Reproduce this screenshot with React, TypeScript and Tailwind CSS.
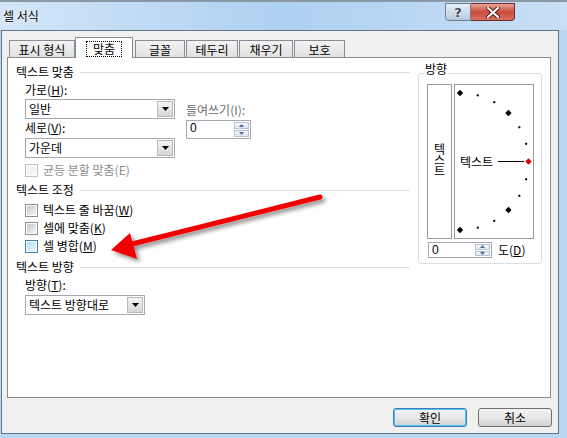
import React from "react";

type P = { className?: string; children?: React.ReactNode };

function Tab({ className = "", children, active }: P & { active?: boolean }) {
  if (active) {
    return (
      <div
        className={`relative z-10 -mb-px h-[21px] border border-b-0 border-[#898c95] bg-white flex items-start justify-center pt-[3px] ${className}`}
      >
        <span className="h-[16px] px-[6px] leading-[14px] border border-dotted border-black">{children}</span>
      </div>
    );
  }
  return (
    <div
      className={`h-[17px] border border-b-0 border-[#898c95] bg-gradient-to-b from-[#f3f3f3] to-[#e1e1e1] flex items-center justify-center leading-[14px] pt-[2px] ${className}`}
    >
      {children}
    </div>
  );
}

function Header({ className = "", children }: P) {
  return (
    <div className={`flex items-center h-[14px] ${className}`}>
      <span className="leading-[14px] whitespace-nowrap">{children}</span>
      <div className="ml-[6px] flex-1 h-px bg-[#d5dfe5]" />
    </div>
  );
}

function Arrow() {
  return (
    <svg width="7" height="4" viewBox="0 0 7 4">
      <polygon points="0,0 7,0 3.5,4" fill="#000" />
    </svg>
  );
}

function Combo({ className = "", children }: P) {
  return (
    <div className={`h-[20px] border border-[#a5a9ae] bg-white flex ${className}`}>
      <span className="flex-1 pl-[3px] leading-[18px] whitespace-nowrap">{children}</span>
      <div className="m-px w-[16px] border border-[#b9b9b9] bg-gradient-to-b from-[#f4f4f4] to-[#d6d6d6] flex items-center justify-center">
        <Arrow />
      </div>
    </div>
  );
}

function Spin({ className = "" }: P) {
  return (
    <div className={`border border-[#a5a9ae] bg-white flex ${className}`}>
      <span className="flex-1 pl-[3px] leading-[15px] font-['Liberation_Sans',sans-serif] text-[12px]">0</span>
      <div className="w-[15px] m-px flex flex-col gap-px">
        <div className="flex-1 border border-[#b8c2cf] bg-gradient-to-b from-[#f5f7fa] to-[#dfe6ee] flex items-center justify-center">
          <svg width="5" height="3" viewBox="0 0 5 3">
            <polygon points="0,3 5,3 2.5,0" fill="#4a6aa8" />
          </svg>
        </div>
        <div className="flex-1 border border-[#b8c2cf] bg-gradient-to-b from-[#f5f7fa] to-[#dfe6ee] flex items-center justify-center">
          <svg width="5" height="3" viewBox="0 0 5 3">
            <polygon points="0,0 5,0 2.5,3" fill="#4a6aa8" />
          </svg>
        </div>
      </div>
    </div>
  );
}

function Check({ className = "", children, disabled, hot }: P & { disabled?: boolean; hot?: boolean }) {
  const box = disabled
    ? "border-[#c2c2c2]"
    : hot
    ? "border-[#3c7fb1]"
    : "border-[#8e8f8f]";
  const inner = disabled
    ? "bg-[#f4f4f4]"
    : hot
    ? "bg-gradient-to-br from-[#b6def8] to-[#e9f6fd]"
    : "bg-gradient-to-br from-[#c5c8cd] to-[#f4f4f4]";
  return (
    <div className={`flex items-center h-[14px] ${className}`}>
      <div className={`w-[13px] h-[13px] border ${box} bg-white p-[1px]`}>
        <div className={`w-full h-full ${inner}`} />
      </div>
      <span className={`ml-[5px] leading-[14px] whitespace-nowrap ${disabled ? "text-[#8d8d8d]" : ""}`}>
        {children}
      </span>
    </div>
  );
}

function Dial() {
  const pts = [90, 75, 60, 45, 30, 15, 0, -15, -30, -45, -60, -75, -90];
  return (
    <svg className="absolute left-0 top-0" width="78" height="153" viewBox="0 0 78 153">
      {pts.map((a) => {
        const r = (a * Math.PI) / 180;
        const x = 5 + 68.5 * Math.cos(r);
        const y = 76.5 - 68.5 * Math.sin(r);
        if (a % 45 === 0) {
          return (
            <polygon
              key={a}
              points={`${x},${y - 3.2} ${x + 3.2},${y} ${x},${y + 3.2} ${x - 3.2},${y}`}
              fill={a === 0 ? "#e00000" : "#000"}
            />
          );
        }
        return <rect key={a} x={x - 1} y={y - 1} width="2" height="2" fill="#000" />;
      })}
    </svg>
  );
}

function Button({ className = "", children, focus }: P & { focus?: boolean }) {
  return (
    <div
      className={`w-[74px] h-[19px] rounded-[3px] border flex items-center justify-center leading-[14px] bg-gradient-to-b from-[#f2f2f2] via-[#e8e8e8] to-[#d2d2d2] ${
        focus ? "border-[#3c7fb1] shadow-[inset_0_0_0_1px_#49c2f5]" : "border-[#707070]"
      } ${className}`}
    >
      {children}
    </div>
  );
}

export default function App() {
  return (
    <div className="relative w-[567px] h-[438px] overflow-hidden bg-[#bcd5ee] font-['Noto_Sans_CJK_KR',sans-serif] text-[12px] text-black">
      {/* title bar */}
      <div className="h-[30px] border-t-2 border-[#8a97a5] bg-gradient-to-r from-[#d2e5f8] via-[#aed0f1] to-[#c8dff6] flex items-start">
        <span className="ml-[3px] mt-[7px] leading-[14px] [text-shadow:0_0_6px_#ffffff,0_0_3px_#ffffff]">셀 서식</span>
        <div className="ml-auto mr-[52px] mt-px flex">
          <div className="w-[26px] h-[18px] border border-[#6e7e92] rounded-bl-[4px] bg-gradient-to-b from-[#e6eef7] via-[#d0dcea] to-[#b9c9dc] flex items-center justify-center">
            <span className="font-['DejaVu_Sans',sans-serif] font-bold text-[13px] leading-none text-[#3c4a5c] [text-shadow:0_0_2px_#ffffff]">?</span>
          </div>
          <div className="w-[44px] h-[18px] border border-[#6b2f2a] border-l-0 rounded-br-[4px] bg-gradient-to-b from-[#e7a597] via-[#c94b3c] to-[#d9705c] flex items-center justify-center">
            <svg width="14" height="11" viewBox="0 0 14 11">
              <path d="M2 1 L12 10 M12 1 L2 10" stroke="#4a1a14" strokeWidth="4" strokeLinecap="round" />
              <path d="M2 1 L12 10 M12 1 L2 10" stroke="#ffffff" strokeWidth="2.2" strokeLinecap="round" />
            </svg>
          </div>
        </div>
      </div>

      {/* client area */}
      <div className="ml-px w-[558px] h-[404px] border border-[#66768a] bg-[#f0f0f0] flex flex-col">
        {/* tabs */}
        <div className="pl-[7px] mt-[6px] h-[20px] flex items-end">
          <Tab className="w-[66px]">표시 형식</Tab>
          <Tab active className="w-[58px]">맞춤</Tab>
          <Tab className="ml-[2px] w-[50px]">글꼴</Tab>
          <Tab className="ml-px w-[52px]">테두리</Tab>
          <Tab className="ml-px w-[54px]">채우기</Tab>
          <Tab className="ml-px w-[51px]">보호</Tab>
        </div>

        {/* panel */}
        <div className="ml-[5px] w-[544px] h-[341px] border border-[#898c95] bg-white flex">
          <div className="ml-[8px] w-[394px] flex flex-col">
            <Header className="mt-[7px]">텍스트 맞춤</Header>
            <div className="ml-[9px] mt-[4px] h-[14px] leading-[14px]">
              가로(<u>H</u>):
            </div>
            <div className="ml-[9px] mt-[2px] flex">
              <div className="flex flex-col">
                <Combo className="w-[150px]">일반</Combo>
                <div className="mt-[2px] h-[14px] leading-[14px]">
                  세로(<u>V</u>):
                </div>
                <Combo className="mt-[3px] w-[150px]">가운데</Combo>
              </div>
              <div className="ml-[11px] mt-[4px] flex flex-col">
                <div className="h-[14px] leading-[14px] text-[#6d6d6d] whitespace-nowrap">들여쓰기(I):</div>
                <Spin className="mt-[3px] w-[65px] h-[19px]" />
              </div>
            </div>
            <Check disabled className="ml-[9px] mt-[5px]">균등 분할 맞춤(E)</Check>

            <Header className="mt-[6px]">텍스트 조정</Header>
            <Check className="ml-[9px] mt-[6px]">
              텍스트 줄 바꿈(<u>W</u>)
            </Check>
            <Check className="ml-[9px] mt-[4px]">
              셀에 맞춤(<u>K</u>)
            </Check>
            <Check hot className="ml-[9px] mt-[4px]">
              셀 병합(<u>M</u>)
            </Check>

            <Header className="mt-[7px]">텍스트 방향</Header>
            <div className="ml-[9px] mt-[4px] h-[14px] leading-[14px]">
              방향(<u>T</u>):
            </div>
            <Combo className="ml-[9px] mt-[3px] w-[120px]">텍스트 방향대로</Combo>
          </div>

          {/* orientation group */}
          <div className="relative ml-[8px] mt-[15px] w-[124px] h-[191px] rounded-[3px] border border-[#d5dfe5]">
            <span className="absolute left-[5px] -top-[12px] px-px bg-white leading-[14px]">방향</span>
            <div className="ml-[8px] mt-[10px] flex">
              <div className="w-[25px] h-[155px] border border-[#9a9a9a] flex items-center justify-center pb-[5px]">
                <span className="[writing-mode:vertical-rl] [text-orientation:upright] tracking-[-1px] leading-[23px]">
                  텍스트
                </span>
              </div>
              <div className="relative ml-[2px] w-[80px] h-[155px] border border-[#9a9a9a] flex items-center pl-[5px]">
                <span className="leading-[14px]">텍스트</span>
                <div className="ml-[5px] w-[26px] h-px bg-black" />
                <Dial />
              </div>
            </div>
            <div className="ml-[9px] mt-[3px] flex items-center">
              <Spin className="w-[64px] h-[16px]" />
              <span className="ml-[6px] leading-[14px]">
                도(<u>D</u>)
              </span>
            </div>
          </div>
        </div>

        {/* buttons */}
        <div className="mt-[10px] pr-[6px] flex justify-end">
          <Button focus>확인</Button>
          <Button className="ml-[11px]">취소</Button>
        </div>
      </div>

      {/* annotation arrow */}
      <svg className="absolute left-0 top-0 pointer-events-none" width="567" height="438" viewBox="0 0 567 438">
        <defs>
          <filter id="sh" x="-20%" y="-50%" width="140%" height="200%">
            <feDropShadow dx="3" dy="3" stdDeviation="2" floodColor="#000" floodOpacity="0.45" />
          </filter>
        </defs>
        <g filter="url(#sh)">
          <line x1="320" y1="197" x2="128" y2="245" stroke="#f20000" strokeWidth="5" strokeLinecap="round" />
          <polygon points="111,250 130,233 137,259" fill="#f20000" />
        </g>
      </svg>
    </div>
  );
}
